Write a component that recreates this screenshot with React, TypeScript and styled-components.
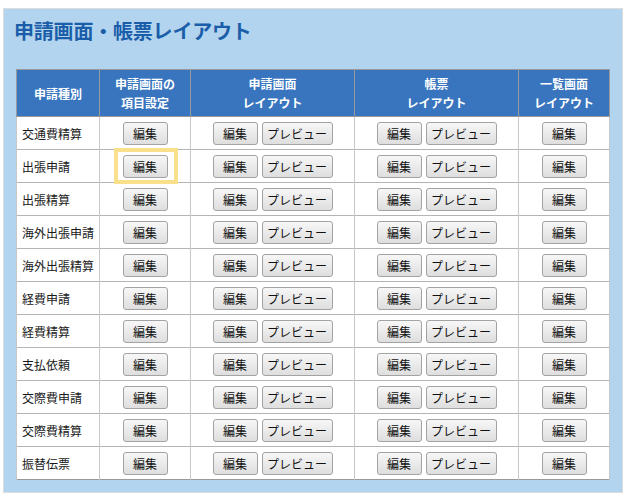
import React from "react";
import styled, { createGlobalStyle } from "styled-components";

const Global = createGlobalStyle`
  html, body { margin: 0; padding: 0; background: #ffffff; }
  body { font-family: "Noto Sans CJK JP", "Noto Sans", sans-serif; }
`;

const Panel = styled.div`
  box-sizing: border-box;
  width: 620px;
  margin: 8px 0 0 3px;
  padding: 0 12px 12px 12px;
  background: #b3d4ee;
  border: 1px solid #dcdcdc;
`;

const Title = styled.h1`
  margin: 0 0 0 -2px;
  padding: 8px 0 0 0;
  height: 60px;
  box-sizing: border-box;
  font-size: 20px;
  line-height: 28px;
  font-weight: bold;
  color: #1a5da8;
  letter-spacing: -0.2px;
`;

const Table = styled.table`
  width: 593px;
  border-collapse: collapse;
  table-layout: fixed;
  background: #ffffff;
  border: 1px solid #999999;
  font-size: 12px;
`;

const Th = styled.th<{ $w: number }>`
  width: ${(p) => p.$w}px;
  height: 47px;
  padding: 0;
  box-sizing: border-box;
  background: #3875be;
  color: #ffffff;
  font-weight: bold;
  font-size: 12px;
  line-height: 19px;
  text-align: center;
  vertical-align: middle;
  border: 1px solid #999999;
  border-top: none;
`;

const Td = styled.td<{ $left?: boolean }>`
  height: 33px;
  padding: 0 0 0 ${(p) => (p.$left ? "5px" : "0")};
  box-sizing: border-box;
  border-top: 1px solid #b4b4b4;
  border-left: 1px solid #c8c8c8;
  border-right: 1px solid #c8c8c8;
  text-align: ${(p) => (p.$left ? "left" : "center")};
  vertical-align: middle;
  color: #1a1a1a;
  font-size: 12px;
`;

const Group = styled.div`
  display: flex;
  justify-content: center;
  align-items: center;
  gap: 4px;
`;

const Button = styled.button<{ $w: number; $mark?: boolean }>`
  position: relative;
  box-sizing: border-box;
  width: ${(p) => p.$w}px;
  height: 23px;
  padding: 0;
  margin: 0;
  border: 1px solid #a3a3a3;
  border-radius: 3px;
  background: linear-gradient(#f7f7f7, #dedede);
  font-family: "Noto Sans CJK JP", sans-serif;
  font-size: 12px;
  line-height: 21px;
  color: #111111;
  cursor: pointer;
  &::after {
    content: "";
    display: ${(p) => (p.$mark ? "block" : "none")};
    position: absolute;
    left: -10px;
    right: -11px;
    top: -8px;
    bottom: -7px;
    border: 4px solid #f8e08c;
    pointer-events: none;
  }
`;

const rows = [
  "交通費精算",
  "出張申請",
  "出張精算",
  "海外出張申請",
  "海外出張精算",
  "経費申請",
  "経費精算",
  "支払依頼",
  "交際費申請",
  "交際費精算",
  "振替伝票",
];

export default function App() {
  return (
    <>
      <Global />
      <Panel>
        <Title>申請画面・帳票レイアウト</Title>
        <Table>
          <thead>
            <tr>
              <Th $w={83}>申請種別</Th>
              <Th $w={91}>
                申請画面の
                <br />
                項目設定
              </Th>
              <Th $w={164}>
                申請画面
                <br />
                レイアウト
              </Th>
              <Th $w={164}>
                帳票
                <br />
                レイアウト
              </Th>
              <Th $w={91}>
                一覧画面
                <br />
                レイアウト
              </Th>
            </tr>
          </thead>
          <tbody>
            {rows.map((r, i) => (
              <tr key={r}>
                <Td $left>{r}</Td>
                <Td>
                  <Group>
                    <Button $w={45} $mark={i === 1}>編集</Button>
                  </Group>
                </Td>
                <Td>
                  <Group>
                    <Button $w={45}>編集</Button>
                    <Button $w={71}>プレビュー</Button>
                  </Group>
                </Td>
                <Td>
                  <Group>
                    <Button $w={45}>編集</Button>
                    <Button $w={71}>プレビュー</Button>
                  </Group>
                </Td>
                <Td>
                  <Group>
                    <Button $w={45}>編集</Button>
                  </Group>
                </Td>
              </tr>
            ))}
          </tbody>
        </Table>
      </Panel>
    </>
  );
}
